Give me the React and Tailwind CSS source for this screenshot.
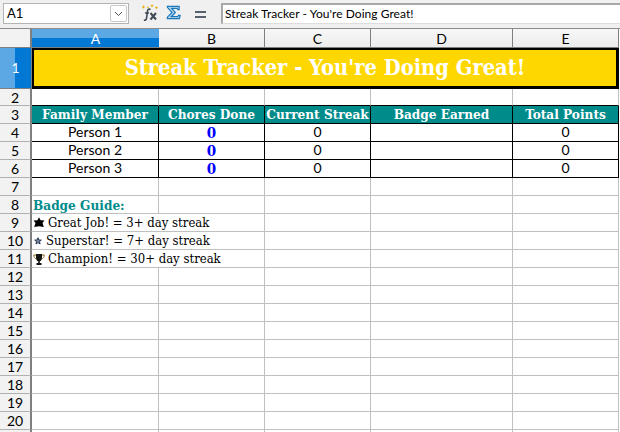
import React from "react";

const SERIF = "font-['DejaVu_Serif_Condensed',serif]";
const SANS = "font-['Lato',sans-serif]";
const cols = ["A", "B", "C", "D", "E"];

function FxIcon() {
  return (
    <svg width="18" height="18" viewBox="0 0 18 18" className="block">
      <g fill="#e8a800">
        <path d="M2.500 1l.6 1.400 1.400.6-1.400.6-.6 1.400-.6-1.400L.5 3l1.400-.6z" />
        <path d="M11 0l.6 1.300 1.300.5-1.300.5-.6 1.300-.6-1.300-1.300-.5 1.300-.5z" />
        <path d="M15.500 2l.6 1.300 1.300.5-1.300.5-.6 1.300-.6-1.300-1.300-.5 1.300-.5z" />
        <path d="M7 2l.4.8.8.4-.8.4-.4.8-.4-.8-.8-.4.8-.4z" />
      </g>
      <path d="M9.500 5.500c-1.600-.8-2.800-.2-3 1.500L5.500 14.500c-.2 1.500-1.200 2-2.600 1.500M4 9h4" fill="none" stroke="#3f4a56" strokeWidth="1.600" />
      <path d="M9.500 9l5.500 6.500M15 9l-5.500 6.500" fill="none" stroke="#3f4a56" strokeWidth="2" />
    </svg>
  );
}

function SigmaIcon() {
  return (
    <svg width="15" height="15" viewBox="0 0 16 16">
      <path d="M1.500 1.500h12.500v3.500h-1.500l-.7-1.500H6l4 4.500-4.500 4.500h7l.8-1.500H15l-.7 3.500H1.500v-1.500l5-5-5-5.500z" fill="#bfe0f5" stroke="#1b75bb" strokeWidth="1.300" />
    </svg>
  );
}

function BlobStar() {
  return (
    <svg width="12" height="12" viewBox="0 0 12 12" className="shrink-0">
      <path d="M6 .2l1.600 3 3.900.4-2 2.500 1.300 4L6 9.300 1.200 10.100l1.300-4-2-2.500 3.900-.4z" fill="#000" />
    </svg>
  );
}

function TinyStar() {
  return (
    <svg width="8" height="8" viewBox="0 0 8 8" className="shrink-0">
      <path d="M4 .7l.9 2.300 2.400.1-1.900 1.500.7 2.400L4 5.600 1.900 7l.7-2.400L.7 3.100l2.400-.1z" fill="#7f8aa0" stroke="#1a2a4a" strokeWidth=".9" />
    </svg>
  );
}

function Trophy() {
  return (
    <svg width="12" height="13" viewBox="0 0 12 13" className="shrink-0">
      <path d="M3 1h6v4c0 2-1.200 3-2.200 3.300V10H8.500v2h-5v-2h1.700V8.300C4.200 8 3 7 3 5z" fill="#111" />
      <path d="M3 2H.8c0 2 .7 3.300 2.500 3.800M9 2h2.200c0 2-.7 3.300-2.500 3.800" fill="none" stroke="#8a6a20" strokeWidth="1" />
    </svg>
  );
}

function RowHead({ n, active }) {
  if (active) {
    return (
      <div className="flex border-r border-b border-[#7f7f7f]">
        <div className="w-[15px] bg-[#5ca8e4]" />
        <div className="flex-1 bg-[#0078d4]" />
        <span className={`absolute left-0 w-[31px] h-[38px] flex items-center justify-center text-white text-[14px] ${SANS}`}>{n}</span>
      </div>
    );
  }
  return (
    <div className={`flex items-center justify-center bg-[#f2f2f2] border-r-2 border-b border-r-[#7f7f7f] border-b-[#b0b0b0] text-[14px] text-black ${SANS}`}>
      {n}
    </div>
  );
}

function Cell({ children, className = "" }) {
  return <div className={`border-r border-b border-[#c0c0c0] flex items-center whitespace-nowrap ${className}`}>{children}</div>;
}

const heads = ["Family Member", "Chores Done", "Current Streak", "Badge Earned", "Total Points"];
const guide = [
  [9, <BlobStar />, "Great Job! = 3+ day streak", "gap-[3px] pl-[1px]"],
  [10, <TinyStar />, "Superstar! = 7+ day streak", "gap-[4px] pl-[2px]"],
  [11, <Trophy />, "Champion! = 30+ day streak", "gap-[3px] pl-[1px]"],
];

export default function App() {
  return (
    <div className="w-[620px] h-[432px] overflow-hidden bg-white flex flex-col">
      <div className="h-[29px] bg-[#f0f0f0] border-b border-[#8c8c8c] flex items-start pt-[3px] pl-[3px] shrink-0">
        <div className="w-[126px] h-[21px] bg-white border border-[#b4b4b4] flex items-center justify-between pr-[1px]">
          <span className={`pl-[3px] text-[13px] text-black ${SANS}`}>A1</span>
          <div className="w-[17px] h-[17px] border border-[#c8c8c8] rounded-[2px] flex items-center justify-center">
            <svg width="9" height="6" viewBox="0 0 9 6"><path d="M1 1l3.500 3.500L8 1" fill="none" stroke="#555" strokeWidth="1" /></svg>
          </div>
        </div>
        <div className="ml-[12px] mt-[1px]"><FxIcon /></div>
        <div className="ml-[7px] mt-[2px]"><SigmaIcon /></div>
        <div className="ml-[14px] mt-[8px] flex flex-col gap-[3px] w-[11px]">
          <div className="h-[2px] bg-[#56616c]" />
          <div className="h-[2px] bg-[#56616c]" />
        </div>
        <div className={`ml-[15px] flex-1 h-[21px] bg-white border-t-2 border-l-2 border-[#a8a8a8] border-b border-b-[#dddddd] flex items-center pl-[2px] text-[12px] tracking-[.05px] text-black ${SANS}`}>
          Streak Tracker - You're Doing Great!
        </div>
      </div>

      <div className="relative grid grid-cols-[32px_127px_106px_106px_142px_106px_1px] grid-rows-[19px_41px_17px_18px_18px_18px_18px_18px_18px_18px_18px_18px_18px_18px_18px_18px_18px_18px_18px_18px_18px_18px]">
        <div className="bg-[#f2f2f2] border-r-2 border-b border-[#7f7f7f]" />
        {cols.map((c, i) => (
          <div
            key={c}
            className={
              i === 0
                ? "relative flex items-center justify-center border-b border-[#7f7f7f] bg-[linear-gradient(#5ca8e4_50%,#0078d4_50%)] text-white text-[14px] font-['Lato',sans-serif]"
                : "flex items-center justify-center bg-[linear-gradient(#f7f7f7,#ececec)] border-r border-b border-[#7f7f7f] text-black text-[14px] font-['Lato',sans-serif]"
            }
          >
            {c}
          </div>
        ))}
        <div />

        <RowHead n={1} active />
        <div className={`col-span-5 bg-[#ffd700] border-2 border-black border-b-[3px] border-r-[3px] flex items-center justify-center text-white font-bold text-[21.7px] ${SERIF}`}>
          Streak Tracker - You're Doing Great!
        </div>
        <div />

        <RowHead n={2} />
        <Cell className="border-b-black" /><Cell className="border-b-black" /><Cell className="border-b-black" /><Cell className="border-b-black" /><Cell className="border-b-black" />
        <div />

        <RowHead n={3} />
        {heads.map((h) => (
          <div key={h} className={`bg-[#008b8b] border-r border-b border-black flex items-center justify-center text-white font-bold text-[13.5px] whitespace-nowrap ${SERIF}`}>
            {h}
          </div>
        ))}
        <div />

        {[1, 2, 3].map((p) => (
          <React.Fragment key={p}>
            <RowHead n={p + 3} />
            <div className={`border-r border-b border-black flex items-center justify-center pb-[2px] text-[14px] text-black ${SANS}`}>Person {p}</div>
            <div className={`border-r border-b border-black flex items-center justify-center pt-[1px] font-bold text-[15px] text-[#0000ff] ${SERIF}`}>0</div>
            <div className={`border-r border-b border-black flex items-center justify-center pb-[2px] text-[14px] text-black ${SANS}`}>0</div>
            <div className="border-r border-b border-black" />
            <div className={`border-r border-b border-black flex items-center justify-center pb-[2px] text-[14px] text-black ${SANS}`}>0</div>
            <div />
          </React.Fragment>
        ))}

        <RowHead n={7} />
        <Cell /><Cell /><Cell /><Cell /><Cell />
        <div />

        <RowHead n={8} />
        <Cell className={`pl-[1px] pt-[1px] text-[#008b8b] font-bold text-[13.5px] ${SERIF}`}>Badge Guide:</Cell>
        <Cell /><Cell /><Cell /><Cell />
        <div />

        {guide.map(([n, icon, text, cls]) => (
          <React.Fragment key={n}>
            <RowHead n={n} />
            <Cell className={`col-span-2 pt-[1px] text-[13px] text-black ${cls} ${SERIF}`}>{icon}<span>{text}</span></Cell>
            <Cell /><Cell /><Cell />
            <div />
          </React.Fragment>
        ))}

        {[12, 13, 14, 15, 16, 17, 18, 19, 20].map((n) => (
          <React.Fragment key={n}>
            <RowHead n={n} />
            <Cell /><Cell /><Cell /><Cell /><Cell />
            <div />
          </React.Fragment>
        ))}
        <div className="bg-[#f2f2f2] border-r-2 border-[#7f7f7f]" />
        <Cell /><Cell /><Cell /><Cell /><Cell />
        <div />
      </div>
    </div>
  );
}
